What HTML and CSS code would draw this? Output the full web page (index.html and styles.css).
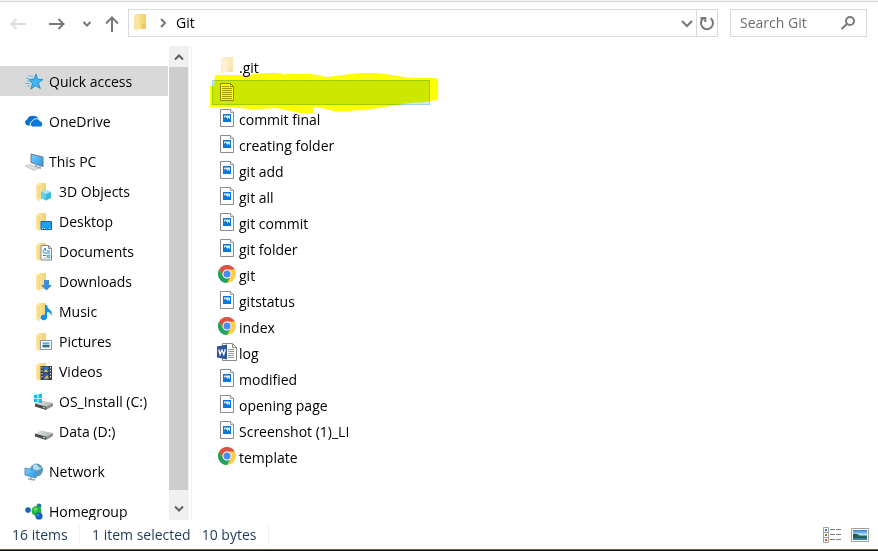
FILE: index.html
```html
<!DOCTYPE html>
<html lang="en">
<head>
<meta charset="utf-8">
<title>Git</title>
<link rel="stylesheet" href="styles.css">
</head>
<body>
<svg class="sprite" aria-hidden="true">
  <defs>
    <linearGradient id="fold" x1="0" x2="1"><stop offset="0" stop-color="#fbe7a6"/><stop offset="1" stop-color="#f3cf68"/></linearGradient>
    <linearGradient id="screen" x1="0" y1="0" x2="1" y2="1"><stop offset="0" stop-color="#7fd0fb"/><stop offset="1" stop-color="#2196e8"/></linearGradient>
    <linearGradient id="disk" x1="0" x2="1"><stop offset="0" stop-color="#e6e6e6"/><stop offset="1" stop-color="#b4b4b4"/></linearGradient>
    <linearGradient id="sky" x1="0" y1="0" x2="0" y2="1"><stop offset="0" stop-color="#2a7fd4"/><stop offset=".5" stop-color="#c8e8f8"/><stop offset=".6" stop-color="#2b6b5c"/><stop offset="1" stop-color="#3a86c8"/></linearGradient>
  </defs>
  <symbol id="folder" viewBox="0 0 18 18">
    <path d="M3 0h8v16H3z" fill="url(#fold)"/><path d="M9 10h3v6H9z" fill="#efc75e"/>
    <path d="M1 1l3 2v15l-3-2z" fill="#fbe3a0"/><path d="M4 3v15" stroke="#edcb73" stroke-width=".7"/>
  </symbol>
  <symbol id="folder-tall" viewBox="0 0 14 18">
    <path d="M2 0h11v15H2z" fill="url(#fold)"/><path d="M9 10h4v5H9z" fill="#efc75e"/><path d="M1 1l4 2v14l-4-2z" fill="#fbe3a0"/><path d="M5 3v12" stroke="#fff1c4" stroke-width=".6"/>
  </symbol>
  <symbol id="star" viewBox="0 0 18 18">
    <path d="M11 1l1.500 5.200 5.500.3-4.600 3.400 1.900 5.600-4.800-2.800-4.700 3.400 1.600-5.700L4 6.500l5-.4z" fill="#43b5f2" stroke="#1580c8" stroke-width=".8"/>
    <path d="M3 3h5M1 5.500h3M2 8h3M0 10.500h5M2 13h3" stroke="#55b4ea" stroke-width=".9"/>
  </symbol>
  <symbol id="cloud" viewBox="0 0 18 18">
    <path d="M3 12.500a3 3 0 0 1-.7-5.900A4.500 4.500 0 0 1 7 3a5.500 5.500 0 0 1 7 4l-4 0-4 3-1 2.500z" fill="#0a6fcf"/>
    <path d="M7.500 14a2.900 2.900 0 0 1-.3-5.600 4.400 4.400 0 0 1 8-.3A3 3 0 0 1 15.500 14z" fill="#0878d8" stroke="#fff" stroke-width=".9"/>
  </symbol>
  <symbol id="pc" viewBox="0 0 20 18">
    <path d="M7 1l12 3v9.500L7 9.500z" fill="url(#screen)" stroke="#64788a"/><path d="M12 11v3l5 1" stroke="#9aa9b5" stroke-width="2" fill="none"/>
    <path d="M1 13l5-1.500 9 3.500-5 2.500z" fill="#e2e6ea" stroke="#aab2ba" stroke-width=".6"/><path d="M4 13.500l7 3M7 12.500l6 2.500" stroke="#b9c1c8" stroke-width=".5"/>
  </symbol>
  <symbol id="cube" viewBox="0 0 18 18"><use href="#folder"/><path d="M6 9l5-2 5 2v6l-5 2.500L6 15z" fill="#37b8d4"/><path d="M6 9l5-2 5 2-5 2z" fill="#a9eaf2"/><path d="M11 11v6.500L6 15V9z" fill="#5fd1e2"/></symbol>
  <symbol id="desktop" viewBox="0 0 18 18"><use href="#folder"/><path d="M6 8.500h10.500v8H6z" fill="#1ba0fb" stroke="#1267af"/><path d="M7 15.500h1m1 0h1m4 0h1" stroke="#d9f0ff"/></symbol>
  <symbol id="docs" viewBox="0 0 18 18"><use href="#folder"/><path d="M6 2.500h7.500l3 3v11.500H6z" fill="#fff" stroke="#7f8790"/><path d="M13.500 2.500v3h3" fill="none" stroke="#7f8790"/><path d="M8 9l2-4 1 3M12 8h3M8 10h7M8 12.500h3" stroke="#1684d8" fill="none"/><path d="M8 15h3M12 12h3v3h-3z" stroke="#52a69e" fill="#8ec9dc" stroke-width=".7"/></symbol>
  <symbol id="down" viewBox="0 0 18 18"><use href="#folder"/><path d="M9 7h5v5h3l-5.500 5.500L6 12h3z" fill="#3b8edc"/></symbol>
  <symbol id="music" viewBox="0 0 18 18"><use href="#folder"/><path d="M10 2h2q0 3 3 5t1 6q0-4-4-4v5.500a3.200 2.700 0 1 1-2-2.500z" fill="#0a94f0"/></symbol>
  <symbol id="pics" viewBox="0 0 18 18"><use href="#folder"/><path d="M5.500 7.500h11v9h-11z" fill="#fff" stroke="#8c9399"/><path d="M7.500 9.500h7v5h-7z" fill="url(#sky)"/></symbol>
  <symbol id="videos" viewBox="0 0 18 18"><use href="#folder"/><path d="M5.500 3H17v14H5.500z" fill="#3c3c40"/><path d="M8.500 3.500h5v6h-5z" fill="#2f72c8"/><path d="M8.500 10.500h5V17h-5z" fill="#2462bd"/><path d="M9 9l2-3 2 3zM9 16l3-4 2 3z" fill="#e4b63b"/><path d="M7 4v12M15.500 4v12" stroke="#e8e8e8" stroke-dasharray="1.500"/></symbol>
  <symbol id="drive" viewBox="0 0 20 18"><path d="M1 10.500l6-3 12 2.500-7 3.500z" fill="url(#disk)"/><path d="M1 10.500l11 3v3.500L1 13.500z" fill="#4a4d4b"/><path d="M12 13.500l7-3.500v3l-7 4z" fill="#8b8e8c"/><path d="M9 14.300l2 .6" stroke="#8df09b" stroke-width="1.300"/></symbol>
  <symbol id="osdrive" viewBox="0 0 20 18"><use href="#drive"/><path d="M0 2l3.500-.6v3.800H0zM4.500 1.200L8 .7v4.500H4.500zM0 6h3.500v3.600L0 9zM4.500 6H8v4.300l-3.500-.6z" fill="#10bdf2"/></symbol>
  <symbol id="network" viewBox="0 0 20 18"><circle cx="12.500" cy="7" r="6.500" fill="#5a98bd"/><path d="M9 2q4-2 5 1t4 1q-2 3-4 3t-3 4l-2-5z" fill="#b6dbea"/><path d="M1 5l11 2.500V15L1 12z" fill="url(#screen)" stroke="#4e95c2"/><path d="M7 14v2m-3 0l7 1" stroke="#99aab5" stroke-width="1.500"/></symbol>
  <symbol id="homegroup" viewBox="0 0 18 18"><circle cx="3" cy="7" r="2.800" fill="#1267b4"/><circle cx="14" cy="3" r="2.400" fill="#2678a8"/><circle cx="11.500" cy="8" r="5" fill="#25b53b"/><circle cx="10.500" cy="6.500" r="2" fill="#64d56b"/><circle cx="14" cy="13" r="3.600" fill="#1262ba"/><circle cx="13" cy="12" r="1.200" fill="#4f91d4"/></symbol>
  <symbol id="image" viewBox="0 0 20 20"><path d="M3.500 1.500h10l3 3v14h-13z" fill="#fcfcfc" stroke="#8b8b8b"/><path d="M13.500 1.500v3h3" fill="#e7e7e7" stroke="#8b8b8b" stroke-width=".8"/><path d="M6 6h8v8H6z" fill="#0b77d7"/><path d="M7 7.500h6v4L11.500 9.500 10.500 11 8.500 8.500 7 10z" fill="#d8eeff"/></symbol>
  <symbol id="text" viewBox="0 0 20 20"><path d="M3.500 1.500h10l3 3v14h-13z" fill="#fff" stroke="#8a8a8a"/><path d="M13.500 1.500v3h3" fill="none" stroke="#8a8a8a"/><path d="M5 4.500h7M5 6.500h10M5 8.500h10M5 10.500h10M5 12.500h10M5 14.500h10M5 16.500h10" stroke="#9a9a9a"/></symbol>
  <symbol id="chrome" viewBox="0 0 20 20"><circle cx="10" cy="10" r="9" fill="#ffcd46"/><path d="M2.200 5.500A9 9 0 0 1 17.800 5.500H10a4.500 4.500 0 0 0-4 6.700z" fill="#dd5144"/><path d="M2.200 5.500A9 9 0 0 0 10 19l3.900-6.800a4.500 4.500 0 0 1-7.800 0z" fill="#1da362"/><circle cx="10" cy="10" r="4.500" fill="#f5f5f5"/><circle cx="10" cy="10" r="3.500" fill="#4c8bf5"/></symbol>
  <symbol id="word" viewBox="0 0 20 20"><path d="M5.500 1.500h10l4 4v13h-14z" fill="#fff" stroke="#8b8b8b"/><path d="M15.500 1.500v4h4" fill="none" stroke="#8b8b8b"/><path d="M11 7.500h6M11 9.500h6M11 11.500h6M11 13.500h6M11 15.500h6" stroke="#999"/><path d="M0 4.500l10-2v15l-10-2z" fill="#2b579a"/><path d="M1.800 7.500l1.300 5L5 8l1.800 4.500 1.500-5.200" stroke="#fff" stroke-width="1.300" fill="none"/></symbol>
</svg>

<main class="window">
  <header class="toolbar">
    <nav class="history" aria-label="History">
      <button class="tool back" aria-label="Back" disabled><svg viewBox="0 0 16 16"><path d="M16 8H1.500M6.500 3l-5 5 5 5"/></svg></button>
      <button class="tool forward" aria-label="Forward"><svg viewBox="0 0 16 16"><path d="M0 8h14.500M9.500 3l5 5-5 5"/></svg></button>
      <button class="tool recent" aria-label="Recent locations"><svg viewBox="0 0 16 16"><path d="M4.500 6L8 9.500 11.500 6"/></svg></button>
      <button class="tool up" aria-label="Up"><svg viewBox="0 0 16 16"><path d="M8 16V1.500M2 7.500l6-6 6 6"/></svg></button>
    </nav>
    <div class="address">
      <svg class="place"><use href="#folder-tall"/></svg>
      <svg class="crumb" viewBox="0 0 8 10"><path d="M2 1l4 4-4 4"/></svg>
      <a class="path" href="#">Git</a>
      <button class="tool expand" aria-label="Previous locations"><svg viewBox="0 0 16 16"><path d="M3 6l5 5 5-5"/></svg></button>
      <button class="tool reload" aria-label="Refresh"><svg viewBox="0 0 16 16"><path d="M11.500 3.300a6 6 0 1 1-7.200.1M1.500 3h4.800v4"/></svg></button>
    </div>
    <label class="search">
      <input type="text" placeholder="Search Git" aria-label="Search Git">
      <svg viewBox="0 0 16 16"><circle cx="10" cy="6" r="4"/><path d="M7 9l-5.500 5"/></svg>
    </label>
  </header>

  <div class="content">
    <nav class="tree" aria-label="Folders">
      <ul>
        <li><a class="current" href="#"><svg><use href="#star"/></svg>Quick access</a></li>
        <li><a href="#"><svg><use href="#cloud"/></svg>OneDrive</a></li>
        <li><a href="#"><svg><use href="#pc"/></svg>This PC</a>
          <ul>
            <li><a href="#"><svg><use href="#cube"/></svg>3D Objects</a></li>
            <li><a href="#"><svg><use href="#desktop"/></svg>Desktop</a></li>
            <li><a href="#"><svg><use href="#docs"/></svg>Documents</a></li>
            <li><a href="#"><svg><use href="#down"/></svg>Downloads</a></li>
            <li><a href="#"><svg><use href="#music"/></svg>Music</a></li>
            <li><a href="#"><svg><use href="#pics"/></svg>Pictures</a></li>
            <li><a href="#"><svg><use href="#videos"/></svg>Videos</a></li>
            <li><a href="#"><svg><use href="#osdrive"/></svg>OS_Install (C:)</a></li>
            <li><a href="#"><svg><use href="#drive"/></svg>Data (D:)</a></li>
          </ul>
        </li>
        <li><a href="#"><svg><use href="#network"/></svg>Network</a></li>
        <li><a href="#"><svg><use href="#homegroup"/></svg>Homegroup</a></li>
      </ul>
    </nav>
    <div class="scrollbar">
      <button class="arrow" aria-label="Scroll up"><svg viewBox="0 0 12 8"><path d="M2 6.500l4-4 4 4"/></svg></button>
      <div class="thumb"></div>
      <button class="arrow last" aria-label="Scroll down"><svg viewBox="0 0 12 8"><path d="M2 1.500l4 4 4-4"/></svg></button>
    </div>
    <ul class="files">
      <li><a href="#"><svg class="faded"><use href="#folder-tall"/></svg>.git</a></li>
      <li class="selected"><a href="#" aria-label="Text document"><svg><use href="#text"/></svg></a>
        <svg class="marker" viewBox="208 70 232 44"><path d="M215 75H250L255 74 270 73H281L283 75 286 74H312L327 77 335 76 350 74 360 73H375L385 74 398 76 410 78H438V92L437 100 430 101 425 102 410 103 385 107 365 110 345 111H334L322 108 313 107V113H300L290 111 275 108 262 109H248L230 107H210V86H214z"/></svg></li>
      <li><a href="#"><svg><use href="#image"/></svg>commit final</a></li>
      <li><a href="#"><svg><use href="#image"/></svg>creating folder</a></li>
      <li><a href="#"><svg><use href="#image"/></svg>git add</a></li>
      <li><a href="#"><svg><use href="#image"/></svg>git all</a></li>
      <li><a href="#"><svg><use href="#image"/></svg>git commit</a></li>
      <li><a href="#"><svg><use href="#image"/></svg>git folder</a></li>
      <li><a href="#"><svg><use href="#chrome"/></svg>git</a></li>
      <li><a href="#"><svg><use href="#image"/></svg>gitstatus</a></li>
      <li><a href="#"><svg><use href="#chrome"/></svg>index</a></li>
      <li><a href="#"><svg><use href="#word"/></svg>log</a></li>
      <li><a href="#"><svg><use href="#image"/></svg>modified</a></li>
      <li><a href="#"><svg><use href="#image"/></svg>opening page</a></li>
      <li><a href="#"><svg><use href="#image"/></svg>Screenshot (1)_LI</a></li>
      <li><a href="#"><svg><use href="#chrome"/></svg>template</a></li>
    </ul>
  </div>

  <footer class="status">
    <span class="count">16 items</span>
    <span class="selection"><span>1 item selected</span><span>10 bytes</span></span>
    <div class="views">
      <button aria-label="Details view"><svg viewBox="0 0 20 18"><path d="M1.500 1.500h5v5h-5zM1.500 6.500h5v5h-5zM1.500 11.500h5v5h-5z" fill="#fff" stroke="#a0a0a0"/><path d="M3 3h2v2H3z" fill="#2c7fb0"/><path d="M3 8h2v2H3z" fill="#8a7b20"/><path d="M3 13h2v2H3z" fill="#d04a1c"/><path d="M8 3.500h5m1 0h5M8 8.500h5m1 0h5M8 13.500h5m1 0h5" stroke="#808080"/></svg></button>
      <button aria-label="Large icons view"><svg viewBox="0 0 20 18"><path d="M1.500 2.500h17v13h-17z" fill="#fff" stroke="#a0a0a0"/><path d="M3 4h14v10H3z" fill="url(#sky)"/><path d="M3 8q4-1 7 2l7 1v1H3z" fill="#245c58"/></svg></button>
    </div>
  </footer>
</main>
</body>
</html>
```

FILE: styles.css
```css
* { box-sizing: border-box; }
body {
  margin: 0;
  background: #fff;
  color: #000;
  font: 14px/20px "Open Sans", "Noto Sans", sans-serif;
}
ul { margin: 0; padding: 0; list-style: none; }
a { color: inherit; text-decoration: none; }
button { padding: 0; border: 0; background: none; }
svg { display: block; flex: none; }
.sprite { position: absolute; width: 0; height: 0; }

.window {
  display: flex;
  flex-direction: column;
  height: 100vh;
  border-bottom: 1px solid #111;
}

.toolbar {
  display: flex;
  flex: none;
  gap: 12px;
  padding: 8px 11px 9px 10px;
  border-top: 1px solid #f2f2f2;
  box-shadow: inset 0 1px #d9d9d9;
}
.history { display: flex; align-items: center; width: 106px; padding-top: 2px; }
.tool svg { width: 16px; height: 16px; fill: none; stroke: #777; stroke-width: 2; }
.back svg { stroke: #dcdcdc; }
.forward { margin-left: 23px; }
.recent { margin-left: 14px; }
.up { margin-left: 9px; }

.address {
  display: flex;
  flex: 1;
  align-items: center;
  height: 28px;
  border: 1px solid #d9d9d9;
}
.place { width: 14px; height: 18px; margin-left: 4px; }
.crumb { width: 8px; height: 10px; margin: 0 9px 0 12px; fill: none; stroke: #777; stroke-width: 2; }
.path { flex: 1; }
.expand { padding: 0 1px; }
.reload {
  display: grid;
  place-items: center;
  align-self: stretch;
  width: 21px;
  border-left: 1px solid #d9d9d9;
}
.search {
  display: flex;
  align-items: center;
  width: 137px;
  height: 28px;
  padding: 0 10px 0 9px;
  border: 1px solid #d9d9d9;
}
.search input {
  flex: 1;
  min-width: 0;
  padding: 0;
  border: 0;
  outline: 0;
  background: none;
  font: inherit;
}
.search input::placeholder { color: #6d6d6d; opacity: 1; }
.search svg { width: 16px; height: 16px; fill: none; stroke: #777; stroke-width: 2; }

.content { display: flex; flex: 1; min-height: 0; }
.tree { width: 168px; padding-top: 20px; overflow: hidden; }
.tree > ul { display: grid; gap: 10px; }
.tree a {
  display: flex;
  align-items: center;
  gap: 5px;
  height: 30px;
  padding: 2px 0 0 24px;
  white-space: nowrap;
}
.tree svg { width: 20px; height: 18px; }
.tree ul ul a { padding-left: 34px; }
.tree .current { background: #d9d9d9; }

.scrollbar { display: flex; flex-direction: column; width: 20px; margin-left: 1px; background: #f0f0f0; }
.arrow { display: grid; place-items: center; height: 21px; }
.arrow svg { width: 12px; height: 8px; fill: none; stroke: #606060; stroke-width: 2; }
.arrow.last { height: 30px; padding-top: 8px; }
.thumb { flex: 1; margin-right: 1px; background: #cdcdcd; }

.files { flex: 1; margin-left: 2px; padding: 8px 0 0 20px; border-left: 1px solid #f0f0f0; }
.files li { position: relative; width: 218px; height: 26px; }
.files a {
  display: flex;
  align-items: center;
  gap: 2px;
  height: 26px;
  padding: 1px 0 0 5px;
  white-space: nowrap;
}
.files a svg { width: 20px; height: 20px; margin-bottom: 4px; }
.files .faded { height: 18px; opacity: .5; }
.files .selected a { height: 25px; padding: 2px 0 0 4px; border: 1px solid #99d1ff; background: #cce8ff; }
.files .marker {
  position: absolute;
  top: -10px;
  left: -4px;
  width: 232px;
  height: 44px;
  fill: #ff0;
  mix-blend-mode: multiply;
  pointer-events: none;
}

.status {
  display: flex;
  flex: none;
  align-items: center;
  height: 30px;
  padding: 0 8px 0 12px;
  border-bottom: 1px solid #1878c8;
  color: #1e395b;
}
.count { width: 68px; border-right: 1px solid #f0f0f0; }
.selection { display: flex; gap: 11px; padding: 0 12px; border-right: 1px solid #f0f0f0; }
.views { display: flex; gap: 8px; margin-left: auto; }
.views svg { width: 20px; height: 18px; }
```
